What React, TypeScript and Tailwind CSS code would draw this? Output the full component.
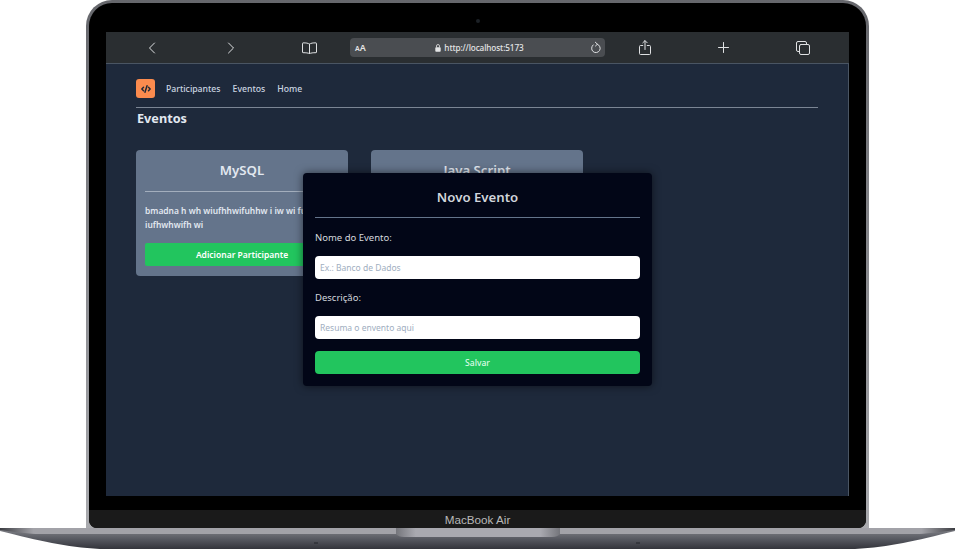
import React from "react";
import { CodeXml } from "lucide-react";

const stroke = { fill: "none", stroke: "#dfe1e3", strokeWidth: 1, strokeLinecap: "round" as const, strokeLinejoin: "round" as const };

function Cell({ children }: { children: React.ReactNode }) {
  return <div className="flex w-[79px] shrink-0 items-center justify-center">{children}</div>;
}

function Toolbar() {
  return (
    <div className="flex h-[32px] shrink-0 items-center border-b border-[#4a5563] bg-[#2a2e31] pl-[6px] pr-[7px]">
      <Cell>
        <svg width="8" height="12" viewBox="0 0 8 12" {...stroke}><path d="M6.500 1 1.500 6l5 5" /></svg>
      </Cell>
      <Cell>
        <svg width="8" height="12" viewBox="0 0 8 12" {...stroke}><path d="M1.500 1l5 5-5 5" /></svg>
      </Cell>
      <Cell>
        <svg width="15" height="12" viewBox="0 0 15 12" {...stroke}>
          <path d="M7.500 2.200C6.200 1 4 .8 1 .9c-.3 0-.5.2-.5.5v8.800c0 .3.2.5.5.5 3 0 5.200.2 6.500 1 1.300-.8 3.500-1 6.500-1 .3 0 .5-.2.5-.5V1.400c0-.3-.2-.5-.5-.5-3-.1-5.200.1-6.500 1.300Z" />
          <path d="M7.500 2.200V11.500" />
        </svg>
      </Cell>
      <div className="ml-px flex h-[19px] w-[255px] shrink-0 items-center rounded-[4px] bg-[#4a4d51] pl-[5px] pr-[4px] text-[#e4e5e6]">
        <span className="w-[14px] text-[9px] leading-none font-semibold"><span className="text-[7px]">A</span>A</span>
        <div className="flex flex-1 items-center justify-center pt-px pr-px">
          <svg width="6" height="8" viewBox="0 0 6 8" className="mr-[3px]">
            <rect x="0.300" y="3.200" width="5.400" height="4.600" rx="0.800" fill="#e4e5e6" />
            <path d="M1.500 3.400V2a1.500 1.500 0 0 1 3 0v1.400" fill="none" stroke="#e4e5e6" strokeWidth="0.800" />
          </svg>
          <span className="text-[8.200px] leading-none font-medium tracking-[-0.1px]">http://localhost:5173</span>
        </div>
        <svg width="10" height="13" viewBox="0 0 10 13" {...stroke}>
          <path d="M6.300 3.200A4.300 4.300 0 1 1 2.200 3.900" />
          <path d="M4.300 1.200 6.400 3.200 4.500 5" />
        </svg>
      </div>
      <Cell>
        <svg width="12" height="15" viewBox="0 0 12 15" {...stroke}>
          <path d="M3.800 5.500H1.500a1 1 0 0 0-1 1v7a1 1 0 0 0 1 1h9a1 1 0 0 0 1-1v-7a1 1 0 0 0-1-1H8.200" />
          <path d="M6 9.500V.8M3.800 2.800 6 .6l2.200 2.200" />
        </svg>
      </Cell>
      <Cell>
        <svg width="11" height="11" viewBox="0 0 11 11" {...stroke}><path d="M5.500.5v10M.5 5.500h10" /></svg>
      </Cell>
      <Cell>
        <svg width="14" height="14" viewBox="0 0 14 14" {...stroke}>
          <rect x="3.500" y="3.500" width="10" height="10" rx="1.500" />
          <path d="M3.500 10.500H2A1.500 1.500 0 0 1 .5 9V2A1.500 1.500 0 0 1 2 .5h7A1.500 1.500 0 0 1 10.500 2v1.500" />
        </svg>
      </Cell>
    </div>
  );
}

function EventCard({ title, desc }: { title: string; desc: string }) {
  return (
    <div className="flex h-[126px] w-[212px] flex-col rounded-[4px] bg-[#64748b] px-[9px] pt-[10px] text-[#e2e8f0]">
      <h2 className="text-center text-[13.200px] leading-[20px] font-semibold">{title}</h2>
      <div className="mt-[11px] h-px shrink-0 bg-[#a3aebd]" />
      <p className="mt-[12px] text-[8.450px] leading-[14px] font-semibold">{desc}</p>
      <button className="mt-[11px] h-[23px] shrink-0 rounded-[2px] bg-[#22c55e] pt-px text-[8.500px] font-semibold text-white">
        Adicionar Participante
      </button>
    </div>
  );
}

function Modal() {
  return (
    <div className="absolute left-[197px] top-[141px] flex h-[213px] w-[349px] flex-col rounded-[4px] bg-[#020617] px-[12px] pt-[14px] shadow-[0_0_8px_rgba(0,0,0,0.55)]">
      <h2 className="text-center text-[13.200px] leading-[20px] font-semibold text-[#d1d5db]">Novo Evento</h2>
      <div className="mt-[10px] h-px shrink-0 bg-[#64748b]" />
      <label className="mt-[13px] text-[9.500px] leading-[13px] text-[#d4d8de]">Nome do Evento:</label>
      <input readOnly placeholder="Ex.: Banco de Dados" className="mt-[12px] h-[23px] shrink-0 rounded-[4px] bg-white px-[5px] text-[8.500px] outline-none placeholder:text-[#a0aec0]" />
      <label className="mt-[12px] text-[9.500px] leading-[13px] text-[#d4d8de]">Descrição:</label>
      <input readOnly placeholder="Resuma o envento aqui" className="mt-[12px] h-[23px] shrink-0 rounded-[4px] bg-white px-[5px] text-[8.500px] outline-none placeholder:text-[#a0aec0]" />
      <button className="mt-[12px] h-[23px] shrink-0 rounded-[4px] bg-[#22c55e] pt-[2px] text-[8.500px] font-medium text-[#dcfce7]">Salvar</button>
    </div>
  );
}

function Screen() {
  return (
    <div className="relative flex h-[464px] w-[743px] flex-col overflow-hidden bg-[#1e293b]">
      <Toolbar />
      <div className="flex flex-1 flex-col border-r border-[#4a5563] pl-[30px] pr-[30px] pt-[15px]">
        <nav className="flex h-[29px] shrink-0 items-start gap-[12px] border-b border-[#7b8594] text-[8.700px] font-medium leading-[20px] text-[#cbd5e1]">
          <div className="mr-[-1px] flex h-[19px] w-[19px] items-center justify-center rounded-[3px] bg-[#fb8b4e]">
            <CodeXml size={10} strokeWidth={3.500} color="#1f2937" />
          </div>
          <a>Participantes</a>
          <a>Eventos</a>
          <a>Home</a>
        </nav>
        <h1 className="mt-[1px] pl-px text-[12.700px] leading-[18px] font-bold text-[#e2e8f0]">Eventos</h1>
        <div className="mt-[23px] flex gap-[23px]">
          <EventCard title="MySQL" desc="bmadna h wh wiufhhwifuhhw i iw wi fu iufhwhwifh wi" />
          <EventCard title="Java Script" desc="" />
        </div>
      </div>
      <Modal />
    </div>
  );
}

function Base() {
  return (
    <svg width="955" height="21" viewBox="0 0 955 21" className="block shrink-0">
      <defs>
        <linearGradient id="body" x1="0" y1="0" x2="0" y2="1">
          <stop offset="0" stopColor="#7d7e84" />
          <stop offset="0.500" stopColor="#55575f" />
          <stop offset="1" stopColor="#33343b" />
        </linearGradient>
        <linearGradient id="lip" x1="0" y1="0" x2="1" y2="0">
          <stop offset="0" stopColor="#3c3d42" />
          <stop offset="0.035" stopColor="#a2a2a8" />
          <stop offset="0.965" stopColor="#a2a2a8" />
          <stop offset="1" stopColor="#3c3d42" />
        </linearGradient>
        <linearGradient id="notch" x1="0" y1="0" x2="1" y2="0">
          <stop offset="0" stopColor="#74757b" />
          <stop offset="0.120" stopColor="#a9a9b0" />
          <stop offset="0.880" stopColor="#a9a9b0" />
          <stop offset="1" stopColor="#74757b" />
        </linearGradient>
      </defs>
      <path d="M0 2H955V3C915 13 890 19 855 21H100C65 19 40 13 0 3Z" fill="url(#body)" />
      <path d="M0 0H955V2C940 4 925 6 915 6H40C30 6 15 4 0 2Z" fill="url(#lip)" />
      <path d="M396 0H560V6C558 8 556 9 552 9H404C400 9 398 8 396 6Z" fill="url(#notch)" />
      <path d="M314 15H318M636 15H640" stroke="#23242a" strokeWidth="1" />
    </svg>
  );
}

export default function App() {
  return (
    <div className="flex h-[549px] w-[955px] flex-col overflow-hidden bg-white font-['Noto_Sans',sans-serif]">
      <div className="mx-[86px] h-[528px] w-[783px] shrink-0 rounded-t-[26px] bg-gradient-to-b from-[#66676c] to-[#a9aaae] px-[3px] pt-[3px]">
        <div className="flex h-[525px] flex-col items-center rounded-t-[23px] rounded-b-[8px] bg-black">
          <div className="flex h-[29px] w-full shrink-0 items-center justify-center">
            <div className="mt-[6px] h-[4px] w-[4px] rounded-full bg-[#1c2126]" />
          </div>
          <Screen />
          <div className="h-[14px] shrink-0" />
          <div className="flex h-[18px] w-full shrink-0 items-center justify-center rounded-b-[8px] bg-[#1a1a1a] pt-[1px] font-['Liberation_Sans',sans-serif] text-[11.700px] text-[#b8b8b8]">
            MacBook Air
          </div>
        </div>
      </div>
      <Base />
    </div>
  );
}
